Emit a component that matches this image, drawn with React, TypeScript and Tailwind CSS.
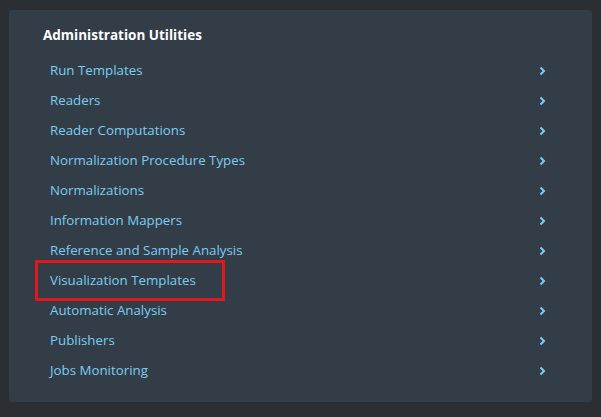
import React from "react";

const items = [
  "Run Templates",
  "Readers",
  "Reader Computations",
  "Normalization Procedure Types",
  "Normalizations",
  "Information Mappers",
  "Reference and Sample Analysis",
  "Visualization Templates",
  "Automatic Analysis",
  "Publishers",
  "Jobs Monitoring",
];

export default function App() {
  return (
    <div className="w-[601px] h-[417px] bg-[#2b2f34] pt-[10px] pl-[9px]" style={{ fontFamily: '"Open Sans", "Noto Sans", sans-serif' }}>
      <div className="w-[583px] h-[392px] bg-[#333d47] rounded-[3px] pt-[15px]">
        <div className="pl-[34px] text-white font-bold text-[13.5px] leading-[20px] mb-[11px]">Administration Utilities</div>
        <div className="flex flex-col">
          {items.map((t, i) => (
            <div key={t} className="relative h-[30px] flex items-center justify-between pl-[41px] pr-[46px] text-[#7ccdf2] text-[13.3px]">
              <span>{t}</span>
              <svg width="7" height="10" viewBox="0 0 7 10"><path d="M1.5 1.5 L5 5 L1.5 8.5" stroke="#7ccdf2" strokeWidth="2" fill="none" /></svg>
              {i === 7 && <div className="absolute left-[26px] top-[-6px] w-[190px] h-[41px] border-[3px] border-[#e3161d]" />}
            </div>
          ))}
        </div>
      </div>
    </div>
  );
}
